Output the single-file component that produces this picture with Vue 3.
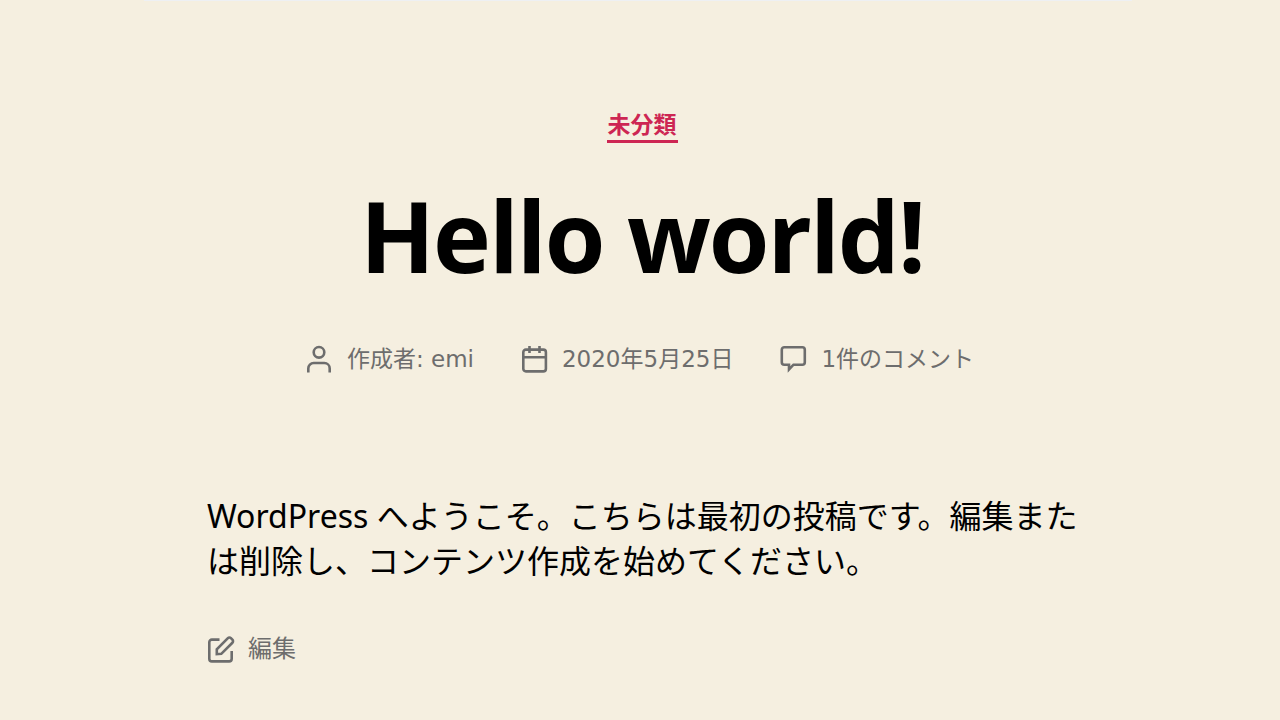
<script setup>
</script>

<template>
  <main class="page">
    <article class="post">
      <header class="head">
        <a class="category" href="#">未分類</a>
        <h1 class="title">Hello world!</h1>
        <ul class="meta">
          <li class="item">
            <svg class="icon" viewBox="0 0 28 28" aria-hidden="true">
              <circle cx="13" cy="7.3" r="5.3" />
              <path d="M2.3 27.6V23.4a5.4 5.4 0 0 1 5.4-5.4h10.6a5.4 5.4 0 0 1 5.4 5.4v4.2" />
            </svg>
            <span>作成者: <a href="#">emi</a></span>
          </li>
          <li class="item">
            <svg class="icon" viewBox="0 0 28 28" aria-hidden="true">
              <rect x="2.3" y="4.6" width="22.6" height="21.8" rx="2.6" />
              <path d="M2.3 12.2h22.6M8.5 1v7M18.5 1v7" />
            </svg>
            <a href="#">2020年5月25日</a>
          </li>
          <li class="item">
            <svg class="icon" viewBox="0 0 28 28" aria-hidden="true">
              <path d="M4.3 2.3h18a2.5 2.5 0 0 1 2.5 2.5v12.4a2.5 2.5 0 0 1-2.5 2.5H13.5l-4.5 4.8v-4.8H4.3a2.5 2.5 0 0 1-2.5-2.5V4.8a2.5 2.5 0 0 1 2.5-2.5z" />
            </svg>
            <a href="#">1件のコメント</a>
          </li>
        </ul>
      </header>
      <div class="content">
        <p class="body">WordPress へようこそ。こちらは最初の投稿です。編集または削除し、コンテンツ作成を始めてください。</p>
        <a class="edit" href="#">
          <svg class="icon" viewBox="0 0 28 28" aria-hidden="true">
            <path d="M12.5 4.6H4.9a2.6 2.6 0 0 0-2.6 2.6v16.6a2.6 2.6 0 0 0 2.6 2.6h17.2a2.6 2.6 0 0 0 2.6-2.6V16" />
            <path d="M9.8 19.2v-4.9L20.9 3.2a2.1 2.1 0 0 1 3 0l1.5 1.5a2.1 2.1 0 0 1 0 3L14.3 18.8z" />
          </svg>
          <span>編集</span>
        </a>
      </div>
    </article>
  </main>
</template>

<style>
body {
  background: #f5efe0;
}
</style>

<style scoped>
.page {
  min-height: 100vh;
  box-sizing: border-box;
  padding: 0 148px 0 144px;
  background: #f5efe0;
  font-family: "DejaVu Sans", "Noto Sans CJK JP", sans-serif;
  color: #000;
}
.post {
  border-top: 1px solid #eef0f3;
}
.head {
  display: flex;
  flex-direction: column;
  align-items: center;
  padding: 106px 0 0 8px;
}
a {
  color: inherit;
  text-decoration: none;
}
.category {
  padding: 0 1px;
  color: #cd2653;
  font-family: "Noto Sans CJK JP", sans-serif;
  font-size: 23px;
  line-height: 33px;
  font-weight: 700;
  border-bottom: 3px solid #cd2653;
}
.title {
  margin: 26px 0 0;
  font-family: "Open Sans", "Noto Sans", sans-serif;
  font-size: 98px;
  line-height: 132px;
  font-weight: 700;
  letter-spacing: -2px;
}
.meta {
  display: flex;
  gap: 47px;
  margin: 40px 0 0;
  padding: 0 4px 0 0;
  list-style: none;
  color: #6d6d6d;
  font-size: 23px;
  line-height: 36px;
  white-space: nowrap;
}
.item,
.edit {
  display: flex;
  align-items: center;
  gap: 13px;
}
.icon {
  width: 28px;
  height: 28px;
  flex: none;
  fill: none;
  stroke: #6d6d6d;
  stroke-width: 2.6;
}
.content {
  max-width: 872px;
  margin: 116px auto 0;
  padding-left: 10px;
}
.body {
  margin: 0;
  font-family: "Noto Sans", "Noto Sans CJK JP", sans-serif;
  font-size: 32px;
  line-height: 45px;
}
.edit {
  margin-top: 48px;
  color: #6d6d6d;
  font-size: 24px;
  line-height: 36px;
}
</style>
